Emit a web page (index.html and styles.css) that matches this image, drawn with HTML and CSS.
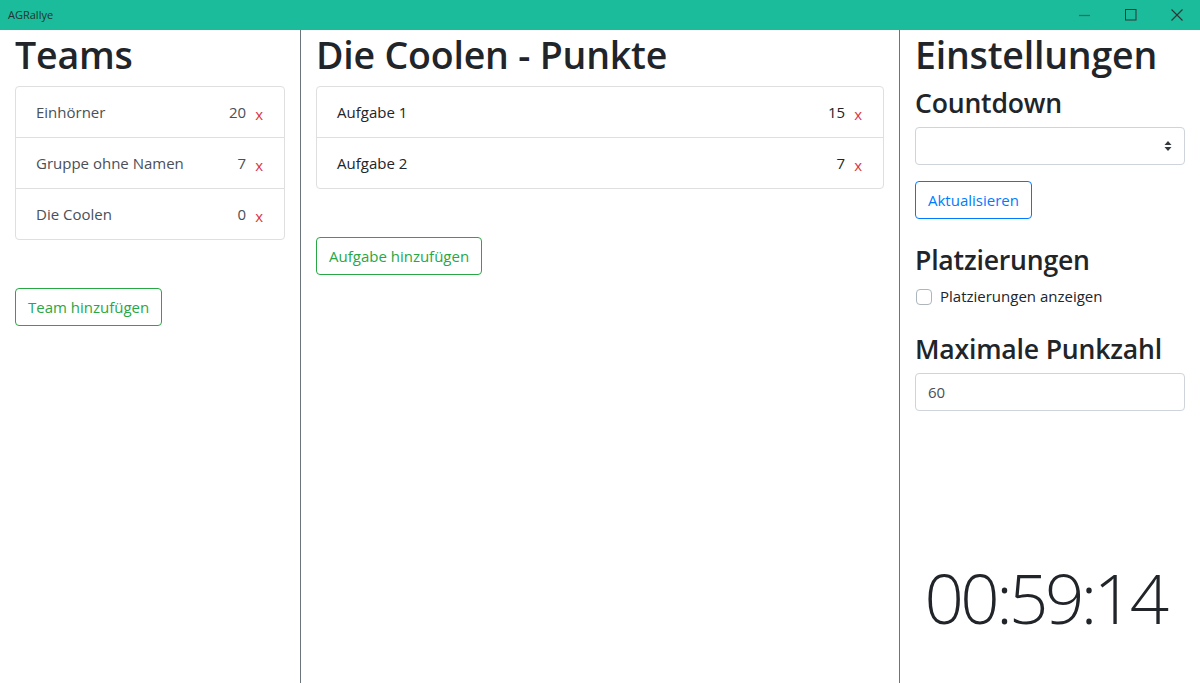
FILE: index.html
```html
<!DOCTYPE html>
<html lang="de">
<head>
<meta charset="utf-8">
<title>AGRallye</title>
<link rel="stylesheet" href="styles.css">
</head>
<body>
<div class="titlebar">
  <span class="app-title">AGRallye</span>
  <div class="win-controls">
    <span class="win-btn min"><svg width="12" height="12" viewBox="0 0 12 12"><line x1="0" y1="6.5" x2="11" y2="6.5" stroke="#2f6f63" stroke-width="1.3"/></svg></span>
    <span class="win-btn"><svg width="12" height="12" viewBox="0 0 12 12"><rect x="0.5" y="0.5" width="10.5" height="10.5" fill="none" stroke="#333" stroke-width="1"/></svg></span>
    <span class="win-btn"><svg width="12" height="12" viewBox="0 0 12 12"><path d="M0.5 0.5 L11.5 11.5 M11.5 0.5 L0.5 11.5" stroke="#333" stroke-width="1.1"/></svg></span>
  </div>
</div>
<div class="main">
  <section class="col col-left">
    <h1>Teams</h1>
    <ul class="list muted">
      <li class="item"><span class="name">Einhörner</span><span class="pts">20</span><span class="del">x</span></li>
      <li class="item"><span class="name">Gruppe ohne Namen</span><span class="pts">7</span><span class="del">x</span></li>
      <li class="item"><span class="name">Die Coolen</span><span class="pts">0</span><span class="del">x</span></li>
    </ul>
    <button class="btn btn-green">Team hinzufügen</button>
  </section>
  <section class="col col-mid">
    <h1>Die Coolen - Punkte</h1>
    <ul class="list">
      <li class="item"><span class="name">Aufgabe 1</span><span class="pts">15</span><span class="del">x</span></li>
      <li class="item"><span class="name">Aufgabe 2</span><span class="pts">7</span><span class="del">x</span></li>
    </ul>
    <button class="btn btn-green">Aufgabe hinzufügen</button>
  </section>
  <section class="col col-right">
    <h1>Einstellungen</h1>
    <h3>Countdown</h3>
    <div class="select"><svg width="8" height="12" viewBox="0 0 8 12"><path d="M4 1 L7.5 5 H0.5 Z M4 11 L0.5 7 H7.5 Z" fill="#343a40"/></svg></div>
    <button class="btn btn-blue">Aktualisieren</button>
    <h3 class="h-plat">Platzierungen</h3>
    <label class="check"><span class="box"></span><span>Platzierungen anzeigen</span></label>
    <h3 class="h-max">Maximale Punkzahl</h3>
    <div class="input">60</div>
    <div class="timer">00:59:14</div>
  </section>
</div>
</body>
</html>
```
FILE: styles.css
```css
* { box-sizing: border-box; }
html, body { margin: 0; padding: 0; }
body {
  font-family: "Open Sans", "Noto Sans", sans-serif;
  font-size: 15px;
  color: #212529;
  background: #fff;
  width: 1200px;
  height: 683px;
  overflow: hidden;
}
.titlebar {
  height: 30px;
  background: #1abc9c;
  display: flex;
  align-items: center;
  justify-content: space-between;
}
.app-title {
  font-size: 11px;
  color: #22332f;
  padding-left: 8px;
  padding-bottom: 2px;
}
.win-controls { display: flex; height: 30px; }
.win-btn {
  width: 46px;
  display: flex;
  align-items: center;
  justify-content: center;
}
.main { display: flex; height: 653px; }
.col { padding: 0 15px; display: flex; flex-direction: column; align-items: flex-start; }
.col-left { width: 301px; border-right: 1px solid #6c757d; }
.col-mid { width: 599px; border-right: 1px solid #6c757d; }
.col-right { width: 300px; }
h1 {
  font-size: 37.5px;
  font-weight: 600;
  line-height: 48px;
  margin: 0 0 8px;
  color: #212529;
  letter-spacing: -0.2px;
  position: relative;
  top: 1px;
}
h3 {
  font-size: 26.6px;
  font-weight: 600;
  line-height: 34px;
  margin: 0 0 7px;
  color: #212529;
  letter-spacing: -0.2px;
}
.list {
  list-style: none;
  margin: 0;
  padding: 0;
  width: 100%;
  border: 1px solid #dfdfdf;
  border-radius: 4px;
}
.item {
  display: flex;
  align-items: center;
  height: 51px;
  padding: 0 21px 0 20px;
  border-top: 1px solid #dfdfdf;
  color: #212529;
}
.item:first-child { border-top: none; height: 50px; }
.muted .item { color: #495057; }
.name { flex: 1; }
.del { color: #dc3545; margin-left: 9px; position: relative; top: 2px; }
.btn {
  font-family: inherit;
  font-size: 15px;
  line-height: 24px;
  padding: 6px 12px;
  border-radius: 4px;
  background: #fff;
  cursor: pointer;
}
.btn-green { color: #28a745; border: 1px solid #28a745; margin-top: 48px; }
.btn-blue { color: #007bff; border: 1px solid #007bff; margin-top: 16px; padding: 6px 12px; height: 38px; }
.select {
  width: 100%;
  height: 38px;
  border: 1px solid #ced4da;
  border-radius: 4px;
  display: flex;
  align-items: center;
  justify-content: flex-end;
  padding-right: 12px;
}
.h-plat { margin-top: 24px; }
.check {
  display: flex;
  align-items: center;
  height: 24px;
  color: #212529;
}
.box {
  width: 16px;
  height: 16px;
  border: 1px solid #adb5bd;
  border-radius: 4px;
  margin: 2px 8px 0 1px;
}
.h-max { margin-top: 24px; }
.input {
  width: 100%;
  height: 38px;
  border: 1px solid #ced4da;
  border-radius: 4px;
  padding: 6px 12px;
  line-height: 24px;
  color: #495057;
}
.timer {
  margin-top: auto;
  margin-bottom: 41px;
  align-self: center;
  font-family: "Open Sans", sans-serif;
  font-weight: 300;
  font-size: 69px;
  line-height: 90px;
  color: #212529;
  letter-spacing: -3.5px;
  padding-right: 10px;
}
```
